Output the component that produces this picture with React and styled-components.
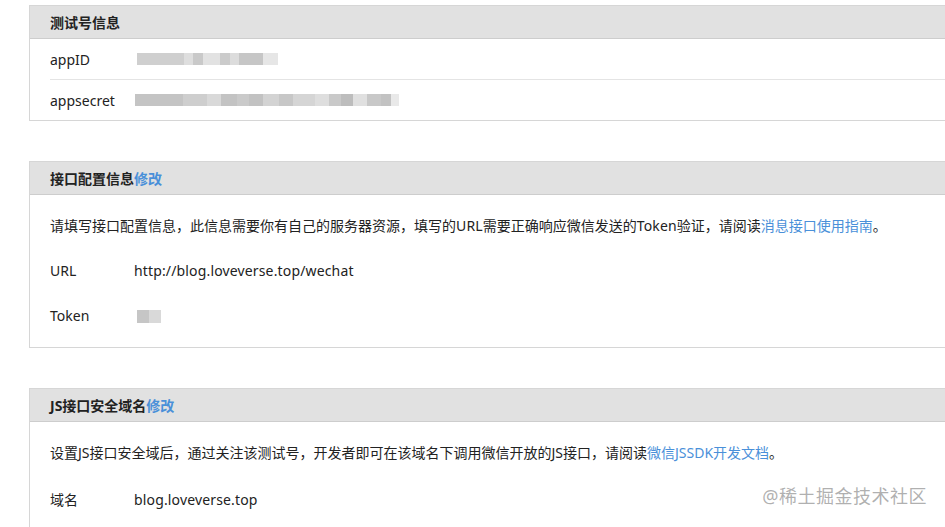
import React from "react";
import styled, { createGlobalStyle } from "styled-components";

const Global = createGlobalStyle`
  html, body { margin: 0; padding: 0; background: #fff; overflow: hidden; }
  body {
    font-family: "Noto Sans", "Noto Sans CJK SC", sans-serif;
    font-size: 14px;
    color: #222;
  }
`;

const Page = styled.div`
  position: relative;
  width: 945px;
  height: 527px;
  overflow: hidden;
  padding: 5px 0 0 29px;
  box-sizing: border-box;
  display: flex;
  flex-direction: column;
  gap: 40px;
`;

const Panel = styled.section`
  width: 1000px;
  flex-shrink: 0;
  border: 1px solid #d6d6d6;
  background: #fff;
`;

const Header = styled.div`
  height: 32px;
  display: flex;
  align-items: center;
  padding-left: 20px;
  background: #e1e1e1;
  border-bottom: 1px solid #cdcdcd;
  font-weight: 700;
  font-size: 14px;
  color: #222;
`;

const Link = styled.a`
  color: #4a90d9;
  text-decoration: none;
  font-weight: ${(p) => (p.$bold ? 700 : 400)};
`;

const InfoRow = styled.div`
  height: 40px;
  margin-left: 20px;
  display: flex;
  align-items: center;
  border-bottom: ${(p) => (p.$last ? "none" : "1px solid #e4e4e4")};
`;

const InfoLabel = styled.span`
  width: 87px;
  flex-shrink: 0;
`;

const Body = styled.div`
  padding: 20px;
  display: flex;
  flex-direction: column;
  gap: ${(p) => p.$gap || 23}px;
`;

const Line = styled.div`
  line-height: 22px;
  display: flex;
  align-items: center;
  white-space: nowrap;
`;

const Latin = styled.span`
  letter-spacing: 0.15px;
`;

const Label = styled.span`
  width: 84px;
  flex-shrink: 0;
`;

const Redacted = styled.span`
  display: inline-flex;
  align-items: center;
  height: 14px;
  margin-left: ${(p) => p.$ml || 0}px;
  filter: blur(0.6px);
`;

const Block = styled.span`
  display: inline-block;
  height: ${(p) => p.$h || 12}px;
  background: ${(p) => p.$c};
`;

const Watermark = styled.div`
  position: absolute;
  right: 18px;
  bottom: 19px;
  font-size: 18px;
  color: rgba(150, 150, 150, 0.75);
  letter-spacing: 0.5px;
`;

const idBlocks = [
  [47, "#cfcfcf"], [9, "#dedede"], [10, "#c9c9c9"], [17, "#e2e2e2"], [10, "#cbcbcb"],
  [9, "#dcdcdc"], [24, "#c6c6c6"], [15, "#e6e6e6"],
];
const secretBlocks = [
  [48, "#c4c4c4"], [24, "#cecece"], [14, "#d9d9d9"], [16, "#c3c3c3"], [12, "#cacaca"],
  [14, "#c2c2c2"], [16, "#d3d3d3"], [14, "#c7c7c7"], [22, "#d5d5d5"], [14, "#dedede"],
  [12, "#c9c9c9"], [12, "#bdbdbd"], [14, "#e0e0e0"], [14, "#c8c8c8"], [10, "#c2c2c2"],
  [8, "#e9e9e9"],
];

export default function App() {
  return (
    <>
      <Global />
      <Page>
        <Panel>
          <Header>测试号信息</Header>
          <InfoRow>
            <InfoLabel>appID</InfoLabel>
            <Redacted>
              {idBlocks.map(([w, c], i) => (
                <Block key={i} $c={c} style={{ width: w }} />
              ))}
            </Redacted>
          </InfoRow>
          <InfoRow $last>
            <InfoLabel>appsecret</InfoLabel>
            <Redacted $ml={-2}>
              {secretBlocks.map(([w, c], i) => (
                <Block key={i} $c={c} style={{ width: w }} />
              ))}
            </Redacted>
          </InfoRow>
        </Panel>

        <Panel>
          <Header>
            接口配置信息<Link $bold href="#">修改</Link>
          </Header>
          <Body>
            <Line>
              请填写接口配置信息，此信息需要你有自己的服务器资源，填写的<Latin>URL</Latin>需要正确响应微信发送的<Latin>Token</Latin>验证，请阅读
              <Link href="#">消息接口使用指南</Link>。
            </Line>
            <Line>
              <Label>URL</Label>
              <Latin>http://blog.loveverse.top/wechat</Latin>
            </Line>
            <Line>
              <Label>Token</Label>
              <Redacted $ml={3}>
                <Block $c="#c6c6c6" $h={13} style={{ width: 12 }} />
                <Block $c="#d9d9d9" $h={13} style={{ width: 12 }} />
              </Redacted>
            </Line>
          </Body>
        </Panel>

        <Panel>
          <Header>
            JS接口安全域名<Link $bold href="#">修改</Link>
          </Header>
          <Body $gap={25}>
            <Line>
              设置JS接口安全域后，通过关注该测试号，开发者即可在该域名下调用微信开放的JS接口，请阅读
              <Link href="#">微信JSSDK开发文档</Link>。
            </Line>
            <Line>
              <Label>域名</Label>
              <Latin>blog.loveverse.top</Latin>
            </Line>
          </Body>
        </Panel>

        <Watermark>@稀土掘金技术社区</Watermark>
      </Page>
    </>
  );
}
